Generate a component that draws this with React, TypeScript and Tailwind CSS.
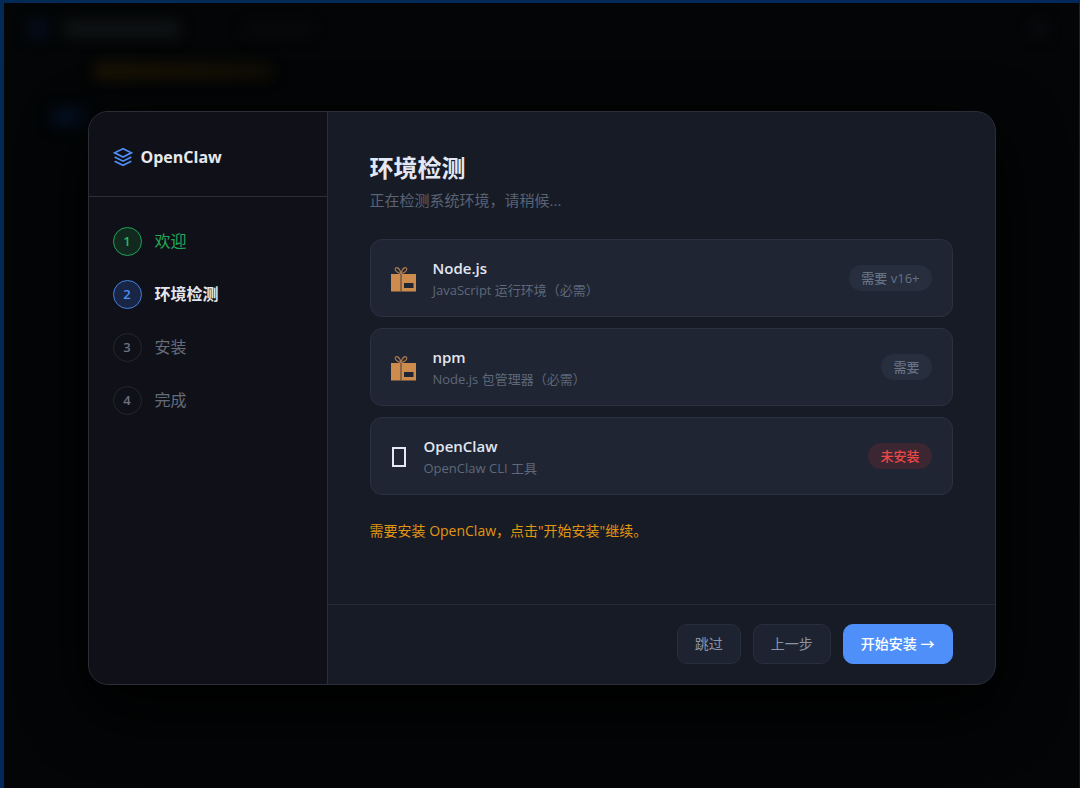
import React from 'react'
import clsx from 'clsx'

type StepState = 'done' | 'active' | 'pending'

interface Step {
  label: string
  state: StepState
}

interface Check {
  name: string
  desc: string
  icon: 'package' | 'missing'
  badge: string
  failed?: boolean
}

const steps: Step[] = [
  { label: '欢迎', state: 'done' },
  { label: '环境检测', state: 'active' },
  { label: '安装', state: 'pending' },
  { label: '完成', state: 'pending' },
]

const checks: Check[] = [
  { name: 'Node.js', desc: 'JavaScript 运行环境（必需）', icon: 'package', badge: '需要 v16+' },
  { name: 'npm', desc: 'Node.js 包管理器（必需）', icon: 'package', badge: '需要' },
  { name: 'OpenClaw', desc: 'OpenClaw CLI 工具', icon: 'missing', badge: '未安装', failed: true },
]

const LayersIcon = () => (
  <svg width="20" height="20" viewBox="0 0 24 24" fill="none" stroke="#4f8ff7" strokeWidth="2" aria-hidden="true">
    <path d="M12 2 2 7l10 5 10-5-10-5z" />
    <path d="m2 17 10 5 10-5" />
    <path d="m2 12 10 5 10-5" />
  </svg>
)

const PackageIcon = () => (
  <svg width="26" height="28" viewBox="0 0 26 28" fill="none" aria-hidden="true">
    <path
      d="M10 9.500C7.500 9.500 4 7 4.200 5 4.600 2.500 8.500 3 10 9.500ZM10 9.500C12.500 9.500 16 7 15.800 5 15.400 2.500 11.500 3 10 9.500Z"
      stroke="#a8794f"
      strokeWidth="1.200"
    />
    <path d="M0 10h25v17.500H0z" fill="#cd8b4e" />
    <path d="M10 10v17.500" stroke="#5d4a40" strokeWidth="1.200" />
    <path d="M13 19h9.500v5H13z" fill="#1f2533" />
  </svg>
)

const MissingIcon = () => (
  <svg width="17" height="28" viewBox="0 0 17 28" fill="none" aria-hidden="true">
    <path d="M2 6h12v18H2z" stroke="#e4e8f2" strokeWidth="2" />
  </svg>
)

const StepItem = ({ step, index }: { step: Step; index: number }) => (
  <li className="flex items-center gap-[13px] py-3" aria-current={step.state === 'active' ? 'step' : undefined}>
    <span
      className={clsx(
        'flex size-[29px] shrink-0 items-center justify-center rounded-full border text-[13px] font-semibold',
        step.state === 'done' && 'border-[#22a356] bg-[#12291f] text-[#27b862]',
        step.state === 'active' && 'border-[#4380df] bg-[#192544] text-[#4f8ff7]',
        step.state === 'pending' && 'border-[#25272e] text-[#6b7280]'
      )}
    >
      {index + 1}
    </span>
    <span
      className={clsx(
        'text-base leading-[29px]',
        step.state === 'done' && 'text-[#22a858]',
        step.state === 'active' && 'font-semibold text-[#e4e6ec]',
        step.state === 'pending' && 'text-[#646b79]'
      )}
    >
      {step.label}
    </span>
  </li>
)

const CheckCard = ({ check }: { check: Check }) => (
  <li className="flex items-center gap-4 rounded-xl border border-[#2a3140] bg-[#1f2533] px-5 py-4">
    {check.icon === 'package' ? <PackageIcon /> : <MissingIcon />}
    <div className="min-w-0 flex-1">
      <div className="text-[15px] leading-6 font-semibold text-[#e2e6f1]">{check.name}</div>
      <div className="text-[13px] leading-5 text-[#5e6879]">{check.desc}</div>
    </div>
    <span
      className={clsx(
        'rounded-full px-3 py-[3px] text-[13px] leading-5 font-medium',
        check.failed ? 'bg-[#3b2632] text-[#f04848]' : 'bg-[#272e3e] text-[#667183]'
      )}
    >
      {check.badge}
    </span>
  </li>
)

// Dimmed and blurred remains of the main window behind the dialog
const Backdrop = () => (
  <div className="absolute inset-0 overflow-hidden bg-[#030506]" aria-hidden="true">
    <div className="flex items-center gap-4 px-6 pt-4 blur-[7px]">
      <div className="size-5 rounded bg-[#050d1c]" />
      <div className="h-4 w-[116px] rounded bg-[#111416]" />
      <div className="ml-12 h-3 w-[70px] rounded bg-[#07090c]" />
      <div className="mr-2 ml-auto size-4 rounded bg-[#090b0f]" />
    </div>
    <div className="mt-6 ml-[90px] h-4 w-[178px] rounded bg-gradient-to-r from-[#1d1504] to-[#120e05] blur-[7px]" />
    <div className="mt-7 ml-12 h-5 w-8 rounded bg-[#050f20] blur-[7px]" />
  </div>
)

const App: React.FC = () => {
  return (
    <div className="h-screen overflow-hidden bg-gradient-to-br from-[#022a55] via-[#01285a] to-[#011a38] pt-[3px] pr-px pl-1 font-['Open_Sans','Noto_Sans_CJK_SC',sans-serif]">
      <div className="relative flex h-screen items-center justify-center px-6 pt-0.5">
        <Backdrop />
        <div
          role="dialog"
          aria-labelledby="setup-title"
          className="relative flex min-h-[574px] w-full max-w-[908px] overflow-hidden rounded-[20px] border border-[#2b2e37] bg-[#171b26] shadow-[0_24px_64px_#000000]"
        >
          <aside className="w-[239px] shrink-0 border-r border-[#2b2e37] bg-[#101118]">
            <div className="flex h-[85px] items-center gap-2 border-b border-[#2b2e37] px-6 pt-1.5">
              <LayersIcon />
              <span className="text-base font-bold text-[#e6e8ee]">OpenClaw</span>
            </div>
            <ol className="px-6 py-[18px]">
              {steps.map((step, i) => (
                <StepItem key={step.label} step={step} index={i} />
              ))}
            </ol>
          </aside>

          <main className="flex min-w-0 flex-1 flex-col">
            <div className="flex-1 px-[42px] pt-10">
              <h1 id="setup-title" className="text-2xl leading-8 font-bold text-[#e4e8f4]">
                环境检测
              </h1>
              <p className="mt-1 text-[15px] leading-6 text-[#596375]">正在检测系统环境，请稍候...</p>
              <ul className="mt-[27px] flex flex-col gap-[11px]">
                {checks.map((check) => (
                  <CheckCard key={check.name} check={check} />
                ))}
              </ul>
              <p className="mt-6 text-sm leading-6 text-[#e0960f]">需要安装 OpenClaw，点击"开始安装"继续。</p>
            </div>
            <footer className="flex justify-end gap-3 border-t border-[#242935] px-[42px] pt-[19px] pb-5 text-sm leading-5">
              <button type="button" className="rounded-[10px] border border-[#272e3c] bg-[#1d2330] px-[17px] py-[9px] text-[#8b94a6]">
                跳过
              </button>
              <button type="button" className="rounded-[10px] border border-[#272e3c] bg-[#1d2330] px-[17px] py-[9px] text-[#8b94a6]">
                上一步
              </button>
              <button type="button" className="rounded-[10px] border border-[#4f8ff9] bg-[#4f8ff9] px-[17px] py-[9px] font-medium text-white">
                开始安装 →
              </button>
            </footer>
          </main>
        </div>
      </div>
    </div>
  )
}

export default App
